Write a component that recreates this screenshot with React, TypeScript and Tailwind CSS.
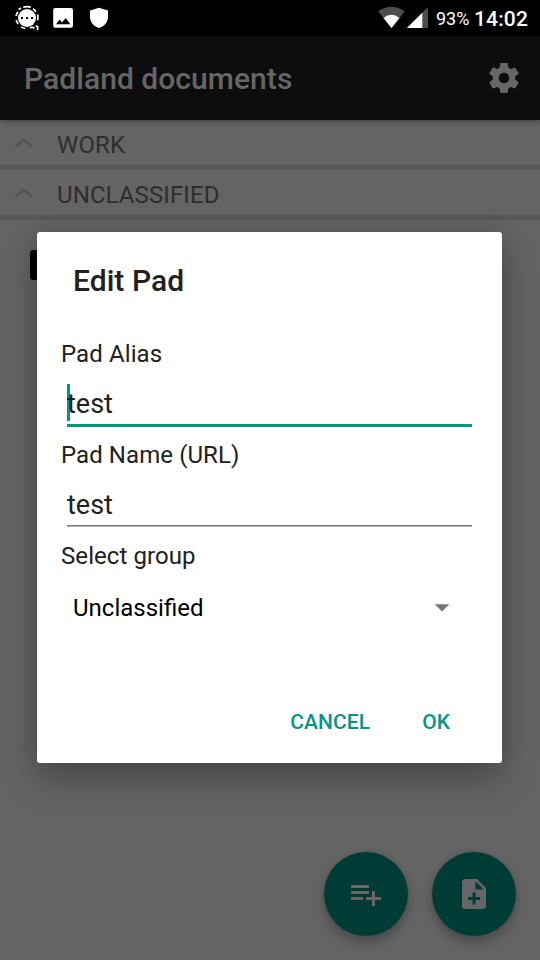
import type { ReactNode } from 'react';

function StatusBar() {
  return (
    <div className="flex h-9 w-full bg-black text-white">
      <svg className="h-9 w-[120px]" viewBox="0 0 120 36" fill="#fff">
        <circle cx="27" cy="18" r="9" />
        <g fill="none" stroke="#fff" strokeWidth="1.700">
          <path d="M23.200 7.300q3.800-1.300 7.600 0M33 8.800q1.800 1.100 2.900 2.900M37.800 14.500v5.800M35.800 25.700l1.800 1v3.500M34.500 28q-2.500-1.200-4.500 0M25.300 28.500q-2.500-.400-4.300-1.600M18.200 24q-1.400-1.800-2-4M16 16q.5-2.500 2-4.200M18.700 9.500l2.300-1.500" />
        </g>
        <g fill="#000">
          <rect x="21" y="17" width="2" height="2" />
          <rect x="26" y="17" width="2" height="2" />
          <rect x="31" y="17" width="2" height="2" />
        </g>
        <path fillRule="evenodd" d="M55.3 8h15.6q2.1 0 2.1 2.1v15.6q0 2.1-2.1 2.1H55.3q-2.1 0-2.1-2.1V10.100q0-2.1 2.100-2.100zM56 24.200h14.400l-4.700-6.300-3.600 4.700-2.600-3.100z" />
        <path d="M99 7.800l9 2.600v6.600c0 5-3.600 9.400-9 11-5.400-1.600-9-6-9-11v-6.600z" />
      </svg>
      <div className="flex-1" />
      <svg className="h-9 w-[60px]" viewBox="374 0 60 36">
        <path d="M378.300 11.400Q391.500 2.200 404.700 11.400L391.500 28z" fill="#4d4d4d" />
        <path d="M383.500 17.900Q391.500 11.600 399.500 17.900L391.500 28z" fill="#fff" />
        <path d="M407 28L428 7v21z" fill="#4d4d4d" />
        <path d="M407 28L422.300 12.700V28z" fill="#fff" />
      </svg>
      <div className="ml-0.5 w-[38px] text-[18px] leading-[38px] whitespace-nowrap">93%</div>
      <div className="w-[66px] text-[21px] leading-[38px] font-medium tracking-[0.15px] whitespace-nowrap">14:02</div>
    </div>
  );
}

function GroupRow({ name }: { name: string }) {
  return (
    <div className="flex h-[50px] items-start border-b-[5px] border-[#585858] bg-[#646464]">
      <svg className="ml-3 h-[45px] w-6" viewBox="0 0 24 45" fill="none" stroke="#525252" strokeWidth="2.300">
        <path d="M3.300 26.800L11.700 19.700 20 26.800" />
      </svg>
      <div className="ml-[21px] text-[24px] leading-[50px] tracking-[0.1px] text-[#2e2e2e]">{name}</div>
    </div>
  );
}

function Fab({ label, children }: { label: string; children: ReactNode }) {
  return (
    <button aria-label={label} className="flex size-[84px] items-center justify-center rounded-full bg-[#003c36] shadow-[0_7px_12px_rgba(0,0,0,0.24),0_0_5px_rgba(0,0,0,0.12)]">
      <svg className="size-9" viewBox="0 0 24 24" fill="#666">{children}</svg>
    </button>
  );
}

function EditPadDialog() {
  return (
    <div className="absolute top-[232px] left-[37px] flex h-[531px] w-[465px] flex-col rounded-[3px] bg-white text-[#212121] shadow-[0_18px_36px_rgba(0,0,0,0.23),0_0_28px_rgba(0,0,0,0.14)]">
      <h2 className="mt-7 ml-9 h-[74px] text-[30px] leading-[41px] font-medium tracking-[0.05px]">Edit Pad</h2>
      <label className="ml-6 h-[50px] text-[24px] leading-[40px] tracking-[0.1px]">Pad Alias</label>
      <div className="relative mr-[30px] ml-[30px] h-[43px] border-b-[3px] border-[#009688] text-[27px] leading-[40px]">
        <span className="absolute top-0 left-0 h-[37px] w-[3px] bg-[#009688]" />
        <span className="relative">test</span>
      </div>
      <label className="mt-2 ml-6 h-[50px] text-[24px] leading-[40px] tracking-[0.08px]">Pad Name (URL)</label>
      <div className="mr-[30px] ml-[30px] h-[41px] border-b border-[#757575] text-[27px] leading-[40px] shadow-[0_1px_0_#b0b0b0]">test</div>
      <label className="mt-[10px] ml-6 h-[52px] text-[24px] leading-[40px] tracking-[0.08px]">Select group</label>
      <div className="mr-[52px] ml-9 flex h-10 items-center justify-between text-[24px] leading-[40px] text-black">
        <span>Unclassified</span>
        <svg className="h-2 w-4" viewBox="0 0 16 8" fill="#757575"><path d="M.7.200h14.600L8 7.500z" /></svg>
      </div>
      <div className="mt-[74px] flex h-10 justify-end pr-[52px] text-[21px] leading-[41px] font-medium text-[#009688]">
        <button className="mr-[52px] tracking-[0.1px]">CANCEL</button>
        <button>OK</button>
      </div>
    </div>
  );
}

export default function App() {
  return (
    <div className="relative flex h-[960px] w-[540px] flex-col overflow-hidden bg-[#646464] font-[Roboto,sans-serif]">
      <StatusBar />
      <header className="relative z-10 flex h-[84px] items-center justify-between bg-[#0d0d0d] pr-[18px] pl-6 text-[#666] shadow-[0_2px_5px_rgba(0,0,0,0.3)]">
        <h1 className="text-[30px] font-medium tracking-[0.05px]">Padland documents</h1>
        <svg className="size-9" viewBox="0 0 24 24" fill="currentColor">
          <path d="M19.430 12.980c.040-.320.070-.640.070-.980s-.030-.660-.070-.980l2.110-1.650c.190-.150.240-.420.120-.640l-2-3.460c-.120-.220-.390-.300-.610-.220l-2.490 1c-.520-.400-1.080-.730-1.690-.980l-.380-2.650C14.460 2.180 14.250 2 14 2h-4c-.250 0-.460.180-.490.420l-.380 2.650c-.610.250-1.170.590-1.690.980l-2.490-1c-.230-.090-.490 0-.610.220l-2 3.460c-.130.220-.070.490.120.640l2.110 1.650c-.040.320-.070.650-.070.980s.030.660.070.980l-2.110 1.650c-.190.150-.240.420-.120.640l2 3.460c.120.220.390.300.610.220l2.490-1c.520.400 1.080.730 1.690.980l.380 2.650c.030.240.240.420.490.420h4c.250 0 .460-.180.490-.420l.380-2.650c.610-.250 1.170-.590 1.690-.980l2.490 1c.230.090.490 0 .610-.220l2-3.460c.120-.220.070-.490-.120-.640l-2.110-1.650zM12 15.500c-1.930 0-3.500-1.570-3.500-3.500s1.570-3.500 3.500-3.500 3.500 1.570 3.500 3.500-1.570 3.500-3.500 3.500z" />
        </svg>
      </header>
      <main className="flex flex-1 flex-col">
        <GroupRow name="WORK" />
        <GroupRow name="UNCLASSIFIED" />
        <div className="mt-[30px] ml-[30px] size-[30px] rounded-[3px] bg-black" />
        <div className="mt-auto mr-6 mb-6 flex justify-end gap-6">
          <Fab label="Add group">
            <path d="M14 10H2v2h12v-2zm0-4H2v2h12V6zm4 8v-4h-2v4h-4v2h4v4h2v-4h4v-2h-4zM2 16h8v-2H2v2z" />
          </Fab>
          <Fab label="Add pad">
            <path d="M14 2H6c-1.100 0-1.990.900-1.990 2L4 20c0 1.100.890 2 1.990 2H18c1.100 0 2-.900 2-2V8l-6-6zm2 14h-3v3h-2v-3H8v-2h3v-3h2v3h3v2zm-3-7V3.500L18.500 9H13z" />
          </Fab>
        </div>
      </main>
      <EditPadDialog />
    </div>
  );
}
